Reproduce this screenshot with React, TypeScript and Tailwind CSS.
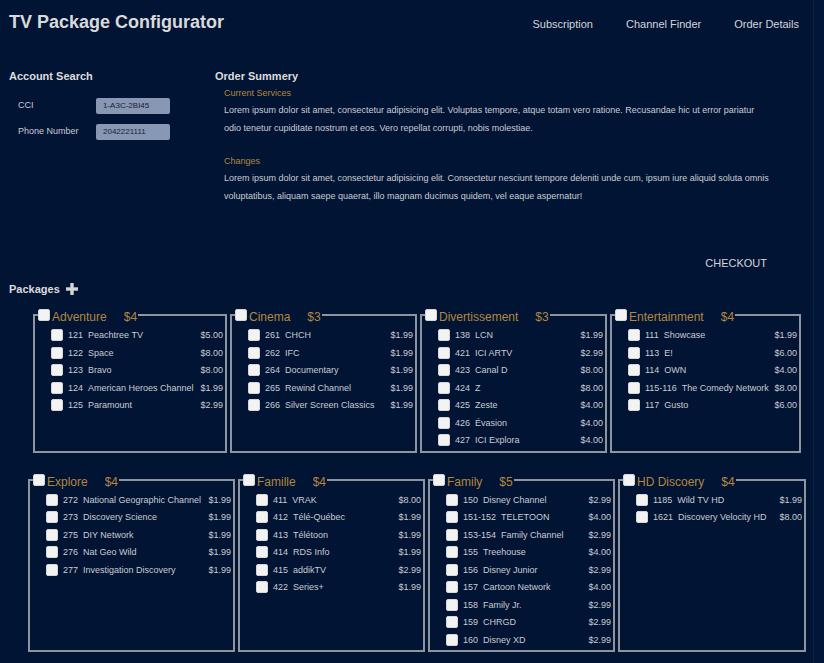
type Channel = [string, string, string]

type Pkg = {
  name: string
  price: string
  width: string
  channels: Channel[]
}

const ROW_ONE: Pkg[] = [
  {
    name: "Adventure",
    price: "$4",
    width: "w-[194px]",
    channels: [
      ["121", "Peachtree TV", "$5.00"],
      ["122", "Space", "$8.00"],
      ["123", "Bravo", "$8.00"],
      ["124", "American Heroes Channel", "$1.99"],
      ["125", "Paramount", "$2.99"],
    ],
  },
  {
    name: "Cinema",
    price: "$3",
    width: "w-[187px]",
    channels: [
      ["261", "CHCH", "$1.99"],
      ["262", "IFC", "$1.99"],
      ["264", "Documentary", "$1.99"],
      ["265", "Rewind Channel", "$1.99"],
      ["266", "Silver Screen Classics", "$1.99"],
    ],
  },
  {
    name: "Divertissement",
    price: "$3",
    width: "w-[187px]",
    channels: [
      ["138", "LCN", "$1.99"],
      ["421", "ICI ARTV", "$2.99"],
      ["423", "Canal D", "$8.00"],
      ["424", "Z", "$8.00"],
      ["425", "Zeste", "$4.00"],
      ["426", "Évasion", "$4.00"],
      ["427", "ICI Explora", "$4.00"],
    ],
  },
  {
    name: "Entertainment",
    price: "$4",
    width: "w-[191px]",
    channels: [
      ["111", "Showcase", "$1.99"],
      ["113", "E!", "$6.00"],
      ["114", "OWN", "$4.00"],
      ["115-116", "The Comedy Network", "$8.00"],
      ["117", "Gusto", "$6.00"],
    ],
  },
]

const ROW_TWO: Pkg[] = [
  {
    name: "Explore",
    price: "$4",
    width: "w-[207px]",
    channels: [
      ["272", "National Geographic Channel", "$1.99"],
      ["273", "Discovery Science", "$1.99"],
      ["275", "DIY Network", "$1.99"],
      ["276", "Nat Geo Wild", "$1.99"],
      ["277", "Investigation Discovery", "$1.99"],
    ],
  },
  {
    name: "Famille",
    price: "$4",
    width: "w-[187px]",
    channels: [
      ["411", "VRAK", "$8.00"],
      ["412", "Télé-Québec", "$1.99"],
      ["413", "Télétoon", "$1.99"],
      ["414", "RDS Info", "$1.99"],
      ["415", "addikTV", "$2.99"],
      ["422", "Series+", "$1.99"],
    ],
  },
  {
    name: "Family",
    price: "$5",
    width: "w-[187px]",
    channels: [
      ["150", "Disney Channel", "$2.99"],
      ["151-152", "TELETOON", "$4.00"],
      ["153-154", "Family Channel", "$2.99"],
      ["155", "Treehouse", "$4.00"],
      ["156", "Disney Junior", "$2.99"],
      ["157", "Cartoon Network", "$4.00"],
      ["158", "Family Jr.", "$2.99"],
      ["159", "CHRGD", "$2.99"],
      ["160", "Disney XD", "$2.99"],
    ],
  },
  {
    name: "HD Discoery",
    price: "$4",
    width: "w-[188px]",
    channels: [
      ["1185", "Wild TV HD", "$1.99"],
      ["1621", "Discovery Velocity HD", "$8.00"],
    ],
  },
]

// white native-looking checkbox
const Box = ({ className = "" }: { className?: string }) => (
  <span className={`block h-3 w-3 shrink-0 rounded-[2px] border border-[#d6d6d6] bg-[#f3f3f3] ${className}`} />
)

const PackageBox = ({ pkg }: { pkg: Pkg }) => (
  <fieldset className={`${pkg.width} min-w-0 border-2 border-[#8f959e] pb-[1px]`}>
    <legend className="ml-[3px] flex h-[14px] items-start pr-[1px]">
      <Box className="mt-[1px]" />
      <span className="ml-[2px] mt-[2px] text-[12px] leading-[14px] text-[#b4863f]">{pkg.name}</span>
      <span className="ml-[17px] mt-[2px] text-[12px] leading-[14px] text-[#b4863f]">{pkg.price}</span>
    </legend>
    <div className="pl-[16px] pr-[2px] pt-[5px]">
      {pkg.channels.map(([code, name, price]) => (
        <div key={code} className="flex h-[17.5px] items-start text-[9px] leading-[17.5px] whitespace-nowrap">
          <Box className="mt-[2px]" />
          <span className="ml-[5px]">{code}</span>
          <span className="ml-[5px]">{name}</span>
          <span className="ml-auto pl-[4px]">{price}</span>
        </div>
      ))}
    </div>
  </fieldset>
)

export default function App() {
  return (
    <div className="flex min-h-[663px] w-[824px] bg-[#011434] font-['Liberation_Sans',Arial,sans-serif] text-[#c9ccd2]">
      <div className="w-[813px] shrink-0">
        {/* Header */}
        <header className="flex items-baseline justify-between pl-[9px] pr-[14px] pt-[11px]">
          <h1 className="text-[18px] font-bold leading-[22px] text-[#dadada]">TV Package Configurator</h1>
          <nav className="flex gap-[33px] text-[11px] text-[#d3d5d9]">
            <span>Subscription</span>
            <span>Channel Finder</span>
            <span>Order Details</span>
          </nav>
        </header>

        {/* Account + order summary */}
        <section className="mt-[36px] flex">
          <div className="w-[215px] shrink-0 pl-[9px]">
            <h2 className="text-[11px] font-bold leading-[14px] text-[#dcdcdc]">Account Search</h2>
            <div className="mt-[15px] flex h-[16px] items-center pl-[9px] text-[9px]">
              <span className="w-[78px]">CCI</span>
              <div className="flex h-[16px] w-[74px] items-center rounded-[2px] bg-[#8797b4] pl-[7px] text-[8px] text-[#1c2333]">
                1-A3C-2BI45
              </div>
            </div>
            <div className="mt-[10px] flex h-[16px] items-center pl-[9px] text-[9px]">
              <span className="w-[78px]">Phone Number</span>
              <div className="flex h-[16px] w-[74px] items-center rounded-[2px] bg-[#8797b4] pl-[7px] text-[8px] text-[#1c2333]">
                2042221111
              </div>
            </div>
          </div>

          <div>
            <h2 className="text-[11px] font-bold leading-[14px] text-[#dcdcdc]">Order Summery</h2>
            <div className="pl-[9px]">
              <div className="mt-[2px] text-[9px] leading-[16px] text-[#b4863f]">Current Services</div>
              <p className="mt-[1px] w-[547px] text-[9px] leading-[17.5px]">
                Lorem ipsum dolor sit amet, consectetur adipisicing elit. Voluptas tempore, atque totam vero ratione.
                Recusandae hic ut error pariatur odio tenetur cupiditate nostrum et eos. Vero repellat corrupti, nobis
                molestiae.
              </p>
              <div className="mt-[16px] text-[9px] leading-[16px] text-[#b4863f]">Changes</div>
              <p className="mt-[1px] w-[547px] text-[9px] leading-[17.5px]">
                Lorem ipsum dolor sit amet, consectetur adipisicing elit. Consectetur nesciunt tempore deleniti unde cum,
                ipsum iure aliquid soluta omnis voluptatibus, aliquam saepe quaerat, illo magnam ducimus quidem, vel
                eaque aspernatur!
              </p>
            </div>
          </div>
        </section>

        <div className="mt-[51px] flex justify-end pr-[46px] text-[11px] leading-[14px] text-[#d3d5d9]">CHECKOUT</div>

        {/* Packages */}
        <div className="mt-[12px] flex h-[14px] items-center gap-[6px] pl-[9px]">
          <h2 className="text-[11px] font-bold leading-[14px] text-[#dcdcdc]">Packages</h2>
          <svg width="12" height="12" viewBox="0 0 12 12" className="text-[#d6d6d6]">
            <rect x="0" y="4.3" width="12" height="3.4" fill="currentColor" />
            <rect x="4.3" y="0" width="3.4" height="12" fill="currentColor" />
          </svg>
        </div>

        <div className="ml-[33px] mt-[12px] flex gap-[3px]">
          {ROW_ONE.map((p) => (
            <PackageBox key={p.name} pkg={p} />
          ))}
        </div>

        <div className="ml-[28px] mt-[20px] flex gap-[3px] pb-[12px]">
          {ROW_TWO.map((p) => (
            <PackageBox key={p.name} pkg={p} />
          ))}
        </div>
      </div>

      {/* scrollbar track */}
      <div className="w-[11px] border-l border-[#0c2146] bg-[#02163a]" />
    </div>
  )
}
